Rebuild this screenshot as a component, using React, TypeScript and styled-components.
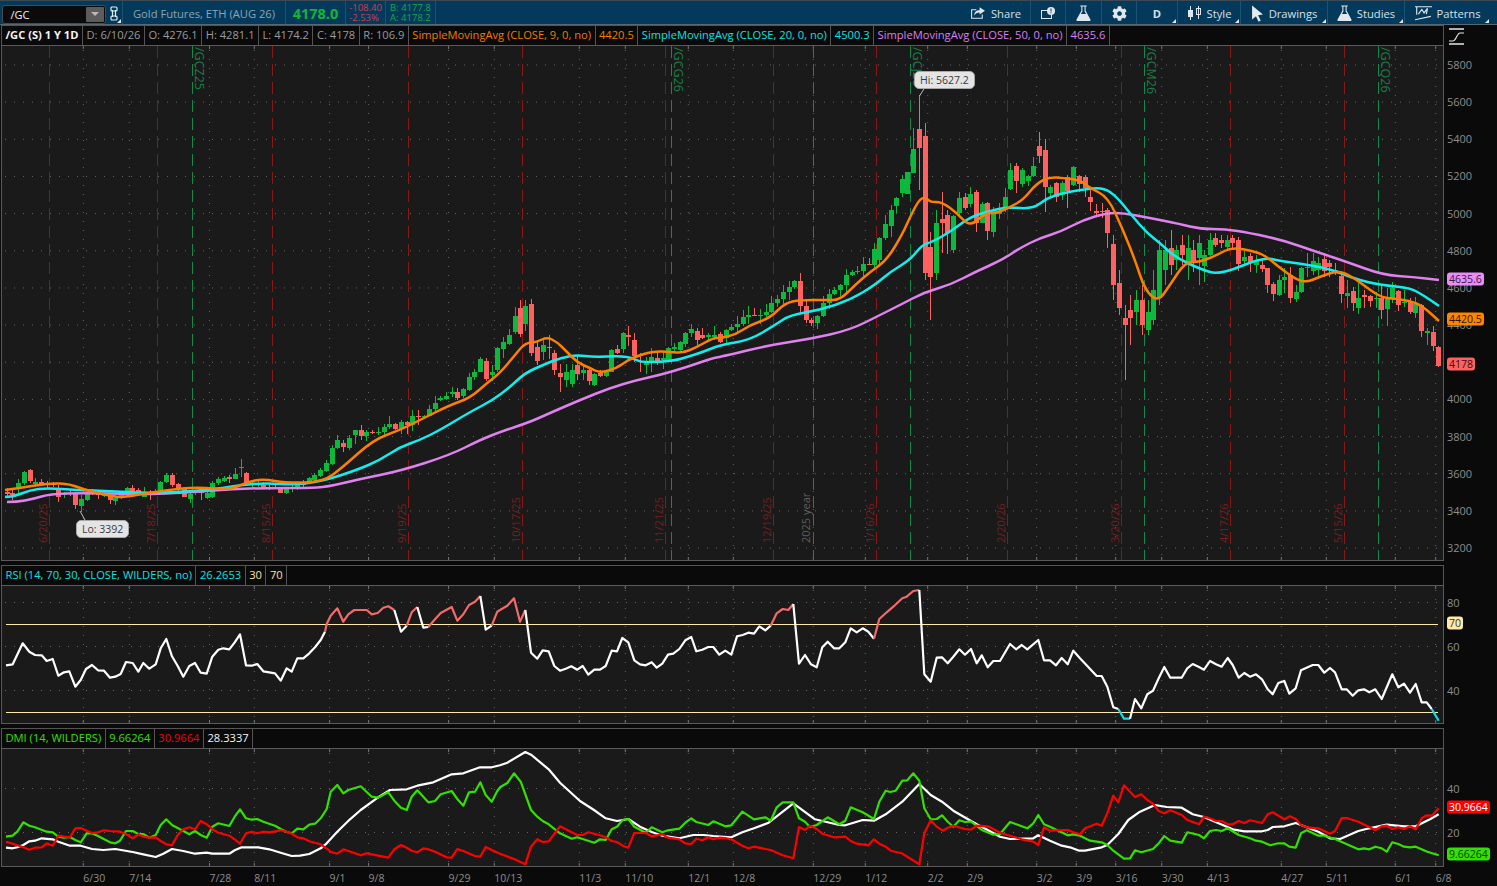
import React from "react";
import styled, { createGlobalStyle } from "styled-components";
import { FaCog } from "react-icons/fa";

const Global = createGlobalStyle`
  html, body { margin: 0; padding: 0; background: #0a0a0a; }
  * { box-sizing: border-box; }
`;
const FONT = `"Open Sans", "Liberation Sans", sans-serif`;

type Pt = [number, number];
const pts = (ox: number, s: string, oy = 585): Pt[] =>
  s.trim().split(/\s+/).map((p) => {
    const [a, b] = p.split(",").map(Number);
    return [ox + a / 3, oy + b / 3] as Pt;
  });
const raw = (s: string): Pt[] =>
  s.trim().split(/\s+/).map((p) => {
    const [a, b] = p.split(",").map(Number);
    return [a, b] as Pt;
  });
const toD = (p: Pt[]) => p.map((q, i) => `${i ? "L" : "M"}${q[0].toFixed(1)} ${q[1].toFixed(1)}`).join("");
const toSmooth = (p: Pt[]) => {
  let d = `M${p[0][0]} ${p[0][1]}`;
  for (let i = 1; i < p.length - 1; i++) {
    const mx = (p[i][0] + p[i + 1][0]) / 2;
    const my = (p[i][1] + p[i + 1][1]) / 2;
    d += `Q${p[i][0]} ${p[i][1]} ${mx.toFixed(1)} ${my.toFixed(1)}`;
  }
  const last = p[p.length - 1];
  return `${d}L${last[0]} ${last[1]}`;
};

/* ---------- price lines ---------- */
const SMA9 = raw(`5,490 20,488 50,483 70,484 85,490 115,497 125,497 167,490 197,487 230,490 247,482 263,479 287,483 323,482 343,467 373,440 400,430 420,420 450,405 470,398 487,383 500,373 515,355 525,343 537,342 547,337 557,342 567,352 578,363 590,368 600,373 617,368 628,360 640,355 655,351 670,352 683,353 697,347 713,338 720,338 735,335 750,325 770,318 785,303 800,300 825,300 840,300 855,285 870,272 887,260 903,233 910,217 920,198 927,198 930,202 942,202 957,213 970,227 985,213 997,213 1010,207 1023,200 1037,183 1050,177 1063,178 1080,180 1090,188 1108,197 1123,230 1135,260 1145,290 1158,302 1170,285 1185,262 1200,262 1217,255 1232,247 1257,252 1267,257 1280,268 1297,280 1307,282 1317,278 1333,272 1343,272 1357,280 1370,290 1383,298 1400,299 1417,303 1427,310 1439,321`);
const SMA20 = raw(`5,497 13,497 30,490 47,488 77,490 110,491 143,493 180,492 217,489 240,485 267,483 293,485 323,481 357,470 380,460 400,447 420,440 440,430 470,412 493,400 510,387 525,373 543,365 560,358 577,355 593,357 620,356 633,358 640,362 660,362 677,360 687,357 703,352 720,345 750,340 775,325 790,315 820,310 850,300 875,285 890,272 910,260 922,245 932,242 950,232 970,217 990,211 1007,207 1033,209 1047,198 1063,193 1080,190 1103,187 1117,197 1133,217 1147,233 1160,243 1175,257 1200,269 1220,275 1263,257 1280,261 1310,265 1333,270 1350,277 1370,283 1390,286 1410,288 1423,295 1439,306`);
const SMA50 = raw(`7,502 17,502 33,499 50,494 83,493 133,494 157,494 193,492 233,489 267,488 307,488 327,487 360,479 400,471 450,455 480,440 500,432 530,422 550,413 580,400 610,388 637,380 660,375 687,367 713,358 720,357 770,345 810,339 850,330 880,315 900,305 925,292 950,285 975,272 1002,260 1020,248 1040,238 1060,232 1083,220 1107,213 1123,213 1150,218 1180,224 1200,229 1225,229 1250,233 1282,240 1317,252 1347,262 1383,275 1413,277 1439,280`);

/* ---------- candles ---------- */
type Candle = { x: number; t: number; b: number; h: number; l: number; up: boolean };
const list = (ox: number, oy: number, s: string): Candle[] =>
  s.trim().split(/\s*;\s*/).filter(Boolean).map((r) => {
    const [zx, c, t, b, h, l] = r.split(/\s+/);
    return {
      x: ox + +zx / 3,
      up: c === "g",
      t: oy + +t / 3,
      b: oy + +b / 3,
      h: oy + +(h ?? t) / 3,
      l: oy + +(l ?? b) / 3,
    };
  });
const seeded = (a: number) => () => {
  a |= 0; a = (a + 0x6d2b79f5) | 0;
  let t = Math.imul(a ^ (a >>> 15), 1 | a);
  t = (t + Math.imul(t ^ (t >>> 7), 61 | t)) ^ t;
  return ((t ^ (t >>> 14)) >>> 0) / 4294967296;
};
const interp = (k: Pt[], x: number) => {
  for (let i = 1; i < k.length; i++) {
    if (x <= k[i][0]) {
      const f = (x - k[i - 1][0]) / (k[i][0] - k[i - 1][0]);
      return k[i - 1][1] + (k[i][1] - k[i - 1][1]) * f;
    }
  }
  return k[k.length - 1][1];
};
const gen = (seed: number, keys: Pt[], from: number, to: number): Candle[] => {
  const r = seeded(seed);
  const out: Candle[] = [];
  let prev = interp(keys, from - 5.73);
  for (let x = from; x <= to; x += 5.73) {
    const c = interp(keys, x) + (r() - 0.5) * 9;
    const t = Math.min(prev, c);
    const b = Math.max(prev, c);
    out.push({ x, t, b, h: t - r() * 9, l: b + r() * 9, up: c < prev });
    prev = c;
  }
  return out;
};

const CANDLES: Candle[] = [
  ...list(0, 440, `20 r 155 163 145 170;37 r 160 166 143 180;55 g 128 145 118 160;72 g 97 128 92 135;89 r 90 122 87 130;106 g 125 132 115 140;123 r 126 132 118 135;140 r 130 136 122 145;158 r 130 136 125 140;175 r 150 172 135 185;192 g 162 166 155 175;209 r 158 161 150 168;226 r 162 195 155 208;243 g 178 198 165 215;260 g 163 180 158 182;277 r 153 157 146 165;294 r 158 165 150 178;312 g 163 167 155 172;329 r 165 180 158 192;346 g 173 182 170 195;363 g 160 172 158 178;380 g 145 160 140 165;397 r 145 155 135 160;414 r 150 160 145 165;431 g 158 170 140 172;449 r 160 163 150 180;466 g 152 160 148 165;481 g 125 158 122 160;499 g 104 125 100 130;517 r 104 135 100 140;534 r 132 148 128 152;551 r 148 170 145 172;569 g 162 178 155 190;586 g 155 160 150 165;603 r 145 160 140 180;620 g 160 175 155 178;637 g 130 170 122 173;654 g 118 130 110 135;671 g 114 122 108 125;688 r 111 116 106 130;705 g 103 116 84 118;722 g 80 84 57 110;739 r 98 130 96 135;756 g 130 135 125 140;773 g 128 130 120 140;790 r 135 145 125 148;807 r 140 143 132 150;824 r 140 143 134 148;841 r 145 158 140 160;858 g 148 160 145 162;875 g 144 147 135 155;892 g 130 148 125 150;909 r 126 135 120 140;926 g 115 130 110 132;943 g 105 120 100 124;960 g 90 108 85 110;977 g 68 92 60 95;995 g 25 72 15 75;1012 g 0 25 -15 28;1029 r 8 22 0 35;1047 g -5 25 -15 30`),
  ...gen(7, raw(`350,435 362,434 375,430 390,426 405,425 415,412 425,413 438,405`), 355, 437),
  ...list(420, 290, `60 g 325 330 318 332;78 g 318 328 305 330;95 g 306 312 292 320;112 r 306 324 293 330;129 g 297 318 295 325;146 g 262 300 250 302;163 g 246 262 238 270;181 g 207 245 200 247;198 r 213 266 205 272;215 g 247 255 225 272;232 g 174 240 172 245;249 g 156 178 140 205;266 g 136 162 118 164;284 g 78 126 52 132;301 r 54 132 30 140;316 g 48 102 30 122;334 r 42 190 27 197;352 r 172 212 155 225;369 g 166 186 150 210;386 r 170 174 135 208;403 r 190 240 180 255;420 r 250 262 222 305;437 g 246 270 222 290;455 g 240 282 222 290;472 r 226 252 195 270;489 g 240 249 222 270;506 r 241 272 235 284;523 g 252 285 250 287;540 r 248 258 240 262;557 g 245 258 242 260;574 g 180 245 178 247;591 r 178 188 165 192;608 g 130 178 126 190;625 r 135 140 108 168;642 r 150 198 128 215;660 r 195 198 188 245;677 g 212 226 200 252;694 g 202 212 175 245;711 r 204 215 185 225;728 g 204 210 183 238;745 g 175 212 172 214;762 g 172 178 160 190;779 g 155 180 152 182;796 g 128 162 125 170;813 g 118 130 102 142;830 r 122 150 115 165;847 r 135 145 115 148;865 g 136 141 128 150;882 g 135 142 108 150;899 r 132 155 125 158`),
  ...gen(23, raw(`720,338 735,325 745,320 755,315 765,315 775,300 785,285 797,278 801,315 808,318 815,320 822,300 830,292 840,290 850,270 865,268 880,242`), 725.5, 875),
  ...list(860, 60, `58 g 535 600 530 620;75 g 492 535 465 540;92 g 450 498 435 530;108 g 415 437 410 460;126 g 358 400 345 412;142 g 336 402 335 402;159 g 268 338 205 338;178 r 207 263 105 390;194 r 228 640 190 660;211 r 560 650 515 780;229 g 490 640 450 660;245 r 477 490 395 580;262 r 465 520 450 582;279 g 468 570 465 580;298 g 415 460 395 465;315 r 410 445 400 450;331 g 402 432 380 440;349 r 396 490 390 515;366 g 432 488 425 488;382 r 430 512 425 540;400 g 458 515 440 532;417 g 457 463 430 478;434 g 412 450 385 455;451 g 330 386 310 390;469 r 318 362 308 398;486 g 330 372 325 380;503 g 348 362 345 378;520 g 318 348 292 350;537 r 258 288 215 310;554 r 270 380 237 455;571 g 380 400 375 410;589 r 368 410 365 425;605 g 370 405 362 420;622 r 350 392 345 445;640 g 322 375 318 378;657 r 347 372 345 395;674 r 352 385 345 412;691 r 410 425 380 452;708 r 454 458 432 470;725 r 452 455 428 475;742 r 450 518 445 565`),
  ...list(0, 0, `3339 r 732 855 705 900;3357 r 849 924 810 945;3375 r 954 975 915 1140;3390 r 930 954 885 1035;3408 g 900 936 870 975;3426 r 900 975 855 1005;3444 g 936 990 900 1005;3459 g 870 960 810 975;3477 g 750 894 720 915;3495 g 750 810 720 855;3513 r 744 795 690 825;3528 g 750 780 735 810;3546 r 735 765 705 795;3564 g 744 786 705 840;3579 r 750 786 720 816;3597 g 729 774 705 855`),
  ...list(1200, 240, `12 g 45 78 30 125;30 g 0 45 -20 48;45 r -5 15 -20 22;62 r 0 8 -15 25;80 g 0 20 -15 28;97 r -5 10 -15 30;115 r 0 72 -8 92;133 g 52 64 30 75;150 r 48 68 40 95;167 g 60 75 45 100;185 r 75 87 60 95;201 r 85 135 83 158;218 r 132 162 125 182;236 g 120 165 105 168;253 g 110 120 85 160;270 r 105 175 80 188;287 g 156 178 135 185;304 g 85 155 82 158;321 g 80 85 40 112;338 g 62 92 40 105;355 g 68 90 50 108;372 r 57 93 38 110;388 r 68 80 60 110;406 r 90 95 70 105;424 r 108 162 105 190;441 g 160 167 120 205;458 r 153 188 140 212;475 g 173 204 130 222;492 r 165 170 150 205;509 r 168 183 165 200;527 g 174 178 155 205;543 r 174 210 135 237;560 g 176 207 145 258;577 g 145 173 127 190;595 r 153 195 150 213;612 g 185 190 150 200;629 r 185 217 175 222;646 g 192 220 170 235;664 r 195 272 193 290;681 g 273 279 265 315;698 r 276 318 258 333;715 r 320 378 318 381`),
];

/* ---------- RSI and DMI ---------- */
const RSI: Pt[] = [
  ...pts(0, `18,241 38,238 68,175 88,200 105,210 125,211 140,228 158,222 175,272 192,262 208,259 226,305 242,285 258,252 276,240 294,256 312,257 330,278 346,275 362,267 378,231 398,234 415,260 430,234 448,251 467,238 482,190 499,162 516,214 533,243 550,275 568,243 585,234 602,263 620,266 637,215 655,194 670,190 688,193 704,172 720,148 738,241 755,242 772,237 790,259 808,262 825,265 842,287 860,250 875,260 892,220 910,220 928,205 945,187 962,165 975,140 980,117 992,92 1012,70 1030,110 1045,88 1063,75 1082,75 1100,75 1115,88 1133,84 1150,68 1165,64 1183,75 1203,140 1220,122 1235,82 1252,66 1270,128 1285,126 1305,103 1322,84 1355,66 1372,107 1390,88 1407,60 1425,50 1441,33 1457,134 1475,122 1492,80`),
  ...pts(500, `0,75 22,62 42,40 60,110 76,75 93,203 112,221 128,196 146,199 163,243 180,257 197,251 214,244 232,254 248,243 265,269 283,254 300,254 317,243 335,197 351,199 367,159 385,172 403,226 420,238 437,241 455,232 470,248 487,236 504,209 520,206 538,192 556,166 574,156 589,199 607,194 625,186 640,186 658,209 676,197 694,209 711,154 728,150 745,143 762,146 778,124 796,136 812,122 830,85 848,72 865,75 880,57 897,236 915,210 933,238 950,247 967,187 983,170 1002,190 1018,190 1036,172 1052,130 1070,142 1088,130 1105,140 1122,161 1138,102 1160,82 1180,65 1207,40 1220,35 1240,18 1258,15 1273,268 1292,290 1310,218 1326,217 1343,235 1360,215 1378,193 1395,209 1413,192 1430,235 1445,211 1463,247 1480,228`),
  ...pts(1000, `0,228 30,177 48,193 65,180 82,193 115,165 132,226 150,226 168,241 185,219 203,238 220,197 240,220 290,273 305,273 322,305 340,367 355,372 372,401 390,401 405,342 424,370 442,328 459,317 476,280 493,246 511,278 545,278 562,250 578,237 597,246 612,254 630,228 648,238 665,245 683,219 698,240 716,278 733,264 750,275 768,268 786,283 803,313 818,328 835,294 853,288 868,326 887,310 903,256 938,240 955,240 973,263 990,249 1005,262 1025,313 1040,313 1058,332 1075,316 1092,313 1108,322 1126,313 1145,342 1177,268 1195,307 1212,296 1230,323 1247,297 1265,352 1280,352 1295,372 1316,407`),
];
const DMI_G: Pt[] = [
  ...pts(0, `18,755 38,752 52,740 70,712 88,722 105,727 140,740 158,742 175,755 192,758 210,756 226,765 242,772 260,745 276,745 294,753 330,772 346,775 360,767 378,738 398,738 415,747 430,747 448,758 467,750 482,720 499,703 516,720 550,738 568,748 585,738 602,750 620,758 637,725 655,715 688,723 704,695 720,673 738,700 755,704 772,702 790,710 825,722 842,732 860,741 875,745 892,731 910,733 928,719 945,716 962,700 980,672 992,620 1012,600 1030,625 1045,615 1082,604 1115,635 1133,638 1165,622 1183,647 1203,668 1220,675 1235,635 1252,616 1285,652 1305,648 1322,628 1355,618 1372,642 1390,662 1407,622 1425,620 1441,592 1457,630 1475,650 1492,618`),
  ...pts(500, `0,607 22,594 42,565 62,590 93,675 112,695 128,708 146,718 180,745 215,761 232,757 283,773 300,763 317,765 335,733 351,725 368,705 385,702 403,725 437,743 455,727 487,742 504,736 538,731 556,713 574,700 589,711 625,720 640,709 676,724 694,721 727,680 762,703 796,697 812,707 830,667 848,652 880,652 897,700 915,710 930,726 950,720 983,697 1018,718 1036,707 1052,667 1088,682 1122,702 1138,650 1157,617 1170,621 1187,617 1207,587 1222,586 1240,565 1258,587 1273,670 1292,703 1310,702 1326,691 1343,710 1360,725 1378,706 1395,711 1413,709 1445,735 1480,749`),
  ...pts(1000, `0,747 30,711 82,730 100,715 115,690 132,718 150,725 203,751 220,748 240,752 270,767 305,772 322,780 340,797 372,821 390,820 405,796 424,802 459,792 476,775 493,753 511,767 545,773 562,742 597,750 612,760 630,738 648,735 665,738 683,730 716,750 750,760 768,767 786,770 811,781 835,775 853,775 868,785 887,788 903,745 920,736 955,752 973,752 1005,762 1075,793 1092,790 1108,793 1126,785 1145,790 1160,800 1177,772 1195,777 1212,785 1230,787 1247,785 1282,800 1316,811`),
];
const DMI_R: Pt[] = [
  ...pts(0, `18,770 38,776 70,787 88,794 105,788 125,787 140,775 158,782 175,752 192,755 210,757 226,730 242,729 260,737 276,744 294,742 312,736 330,738 360,740 378,747 398,760 415,748 430,755 448,758 467,757 482,768 499,778 516,781 533,750 550,733 568,727 585,733 602,708 620,718 637,733 655,743 688,752 704,763 720,776 738,745 755,740 772,745 790,740 808,742 825,739 842,736 860,740 875,746 892,757 910,760 928,769 945,773 962,778 980,791 992,800 1012,806 1030,793 1045,798 1082,811 1100,805 1165,818 1183,793 1203,780 1220,788 1235,797 1252,802 1270,790 1285,793 1305,800 1340,817 1355,818 1372,792 1390,798 1425,813 1441,815 1457,786 1475,795`),
  ...pts(500, `0,806 42,822 76,838 93,785 112,763 128,771 146,769 180,724 215,742 232,750 248,750 265,742 300,751 317,757 335,768 351,771 368,782 385,788 403,744 437,744 455,754 487,748 504,758 538,763 556,775 574,777 589,761 607,766 625,757 640,763 658,758 676,759 694,763 727,782 745,790 762,785 796,792 812,795 848,811 880,820 897,726 915,735 930,722 950,732 967,746 1002,757 1036,755 1052,768 1070,776 1105,781 1122,763 1138,776 1157,785 1172,797 1205,805 1258,838 1273,745 1292,706 1310,725 1328,737 1343,728 1360,722 1395,732 1413,734 1430,722 1463,724 1480,732`),
  ...pts(1000, `0,743 30,752 65,763 100,770 115,780 132,727 150,737 203,735 220,742 240,748 255,730 290,716 305,722 322,685 340,632 355,652 372,601 405,636 424,628 442,645 459,656 476,678 493,685 511,676 545,690 562,705 597,718 612,695 630,700 648,708 665,708 683,718 698,718 716,708 733,714 750,706 786,714 803,688 818,682 853,703 870,694 887,702 903,720 920,727 955,730 990,746 1005,738 1025,699 1040,699 1075,710 1126,735 1145,724 1160,722 1177,732 1195,727 1212,732 1230,724 1247,733 1265,700 1280,691 1295,692 1316,670`),
];
const DMI_W: Pt[] = [
  ...pts(0, `18,788 38,790 52,787 70,780 88,769 105,767 125,760 158,763 175,770 210,782 242,782 276,792 310,795 346,792 398,801 430,808 467,816 490,806 516,792 550,798 585,806 620,803 637,806 688,806 704,796 725,787 775,787 808,793 842,803 875,813 900,812 928,807 962,790 980,775 1012,740 1050,703 1082,675 1130,640 1170,615 1220,613 1252,602 1300,592 1355,568 1390,565 1440,547 1475,547`),
  ...pts(500, `0,541 22,533 76,501 93,509 146,553 180,593 240,648 282,675 317,700 351,708 385,702 420,725 455,741 487,752 538,760 580,750 610,750 640,753 694,757 727,742 762,730 806,713 880,655 945,703 983,712 1018,720 1036,721 1088,705 1122,707 1157,688 1207,650 1258,597 1292,630 1326,650 1360,677 1430,718 1463,735`),
  ...pts(1000, `0,755 30,762 100,760 115,751 150,767 185,782 210,787 238,797 255,797 305,787 322,780 355,747 385,705 420,680 465,660 500,666 545,668 578,688 612,696 640,708 698,733 733,739 786,739 803,735 818,726 853,724 887,714 903,720 955,740 990,760 1020,762 1075,738 1108,730 1160,719 1212,724 1247,724 1290,703 1316,688`),
];

const rsiColor = (y: number) => (y < 624.3 ? "#f46a6a" : y > 712.3 ? "#12dcec" : "#ffffff");
const rsiSegments = () => {
  const out: { c: string; p: Pt[] }[] = [];
  for (let i = 1; i < RSI.length; i++) {
    const c = rsiColor(RSI[i][1]);
    const last = out[out.length - 1];
    if (last && last.c === c) last.p.push(RSI[i]);
    else out.push({ c, p: [RSI[i - 1], RSI[i]] });
  }
  return out;
};

/* ---------- chart annotations ---------- */
const GRID_X = [83.3, 129.3, 209.5, 254.3, 329.6, 368.6, 448.6, 494.3, 579.3, 625.3, 688.3, 733.3, 813.3, 865.3, 927.7, 967.3, 1036.7, 1076.3, 1115.7, 1161.7, 1207.3, 1281.3, 1326.3, 1395.3, 1435.7];
const DATES = ["6/30", "7/14", "7/28", "8/11", "9/1", "9/8", "9/29", "10/13", "11/3", "11/10", "12/1", "12/8", "12/29", "1/12", "2/2", "2/9", "3/2", "3/9", "3/16", "3/30", "4/13", "4/27", "5/11", "6/1", "6/8"];
const RED_X = [49.5, 157.5, 272.5, 408.5, 522.5, 665.5, 773.5, 876.5, 1007.5, 1121.5, 1230.5, 1344.5];
const GREEN_X = [192.5, 671.5, 910.5, 1144.5, 1378.5];
const RED_LABELS: [string, number][] = [["6/20/25", 47], ["7/18/25", 155], ["8/15/25", 270], ["9/19/25", 406], ["10/17/25", 520], ["11/21/25", 663], ["12/19/25", 771], ["1/16/26", 874], ["2/20/26", 1005], ["3/20/26", 1119], ["4/17/26", 1228], ["5/15/26", 1342]];
const GREEN_LABELS: [string, number][] = [["/GCZ25", 195], ["/GCG26", 674], ["/GCJ26", 913], ["/GCM26", 1147], ["/GCQ26", 1381]];
const PRICE_TICKS = [5800, 5600, 5400, 5200, 5000, 4800, 4600, 4400, 4200, 4000, 3800, 3600, 3400, 3200];
const priceY = (p: number) => 65 + (5800 - p) * 0.1858;

/* ---------- layout ---------- */
const Page = styled.div`
  width: 1497px;
  height: 886px;
  overflow: hidden;
  background: #0a0a0a;
  display: flex;
  flex-direction: column;
  font-family: ${FONT};
`;
const Toolbar = styled.div`
  height: 25px;
  flex: none;
  background: #033a5c;
  border-top: 1px solid #3b4a54;
  border-bottom: 1px solid #5a6670;
  padding-right: 7px;
  display: flex;
  align-items: stretch;
  color: #d6e0e6;
  font-size: 11.2px;
`;
const SymbolBox = styled.div`
  width: 104px;
  height: 19px;
  margin: 2px 0 0 1px;
  background: #0b0b0b;
  border: 1px solid #4a4a4a;
  border-radius: 3px;
  display: flex;
  align-items: center;
  justify-content: space-between;
  padding: 0 1px 0 8px;
  color: #f0f0f0;
  font-size: 11px;
`;
const DropButton = styled.div`
  width: 18px;
  height: 15px;
  background: #5c5c5c;
  border-radius: 1px;
  display: flex;
  align-items: center;
  justify-content: center;
  &::after {
    content: "";
    border-left: 4px solid transparent;
    border-right: 4px solid transparent;
    border-top: 4px solid #b8b8b8;
  }
`;
const ToolCell = styled.div<{ $w: number; $line?: boolean }>`
  width: ${(p) => p.$w}px;
  flex: none;
  display: flex;
  align-items: center;
  justify-content: center;
  gap: 5px;
  padding-top: 1px;
  position: relative;
  white-space: nowrap;
  border-right: ${(p) => (p.$line ? "1px solid #1d5273" : "none")};
`;
const Corner = styled.span`
  position: absolute;
  right: 1px;
  bottom: 1px;
  width: 0;
  height: 0;
  border-left: 4px solid transparent;
  border-bottom: 4px solid #dfe7ec;
`;
const Title = styled.span`
  color: #8ea4b2;
  font-size: 11.2px;
`;
const LastPrice = styled.span`
  color: #12b53a;
  font-size: 14.5px;
  font-weight: 700;
`;
const Pair = styled.div<{ $c: string }>`
  display: flex;
  flex-direction: column;
  align-items: flex-start;
  color: ${(p) => p.$c};
  font-size: 9.5px;
  line-height: 10px;
`;
const Spacer = styled.div`
  flex: 1;
`;
const Stack = styled.div`
  display: flex;
  flex-direction: column;
  gap: 4px;
`;
const Pane = styled.section`
  display: flex;
  flex-direction: column;
`;
const Legend = styled.div`
  width: 1443px;
  height: 20px;
  margin-left: 1px;
  border: 1px solid #555;
  border-bottom: none;
  background: #0a0a0a;
  display: flex;
  align-items: stretch;
  font-size: 11.15px;
`;
const LegendCell = styled.div<{ $c: string; $bold?: boolean }>`
  color: ${(p) => p.$c};
  font-weight: ${(p) => (p.$bold ? 700 : 400)};
  padding: 0 3.5px 2px;
  border-right: 1px solid #555;
  display: flex;
  align-items: center;
  white-space: nowrap;
`;
const Row = styled.div<{ $h: number }>`
  height: ${(p) => p.$h}px;
  display: flex;
  position: relative;
`;
const Plot = styled.div`
  width: 1443px;
  margin-left: 1px;
  flex: none;
  position: relative;
  outline: 1px solid #5a5a5a;
  outline-offset: -1px;
  svg {
    display: block;
  }
`;
const Axis = styled.div`
  flex: 1;
  position: relative;
  background: #0a0a0a;
`;
const AxisLabel = styled.span`
  position: absolute;
  left: 3px;
  transform: translateY(-50%);
  color: #8d8d8d;
  font-size: 11px;
  line-height: 14px;
`;
const Badge = styled.span<{ $bg: string; $fg: string }>`
  position: absolute;
  left: 3px;
  transform: translateY(-50%);
  padding: 0 2px;
  height: 13px;
  background: ${(p) => p.$bg};
  color: ${(p) => p.$fg};
  border-radius: 3px;
  font-size: 10.5px;
  line-height: 13px;
  z-index: 2;
`;
const Bubble = styled.div`
  position: absolute;
  height: 18px;
  padding: 0 5px;
  background: #e4e4e4;
  border: 1px solid #a8a8a8;
  border-radius: 5px;
  color: #3a3a3a;
  font-size: 10.5px;
  line-height: 16px;
  white-space: nowrap;
`;
const TimeAxis = styled.div`
  height: 19px;
  position: relative;
`;
const DateLabel = styled.span`
  position: absolute;
  top: 4px;
  color: #8d8d8d;
  font-size: 10.5px;
  line-height: 14px;
`;
const ToolAxisIcon = styled.div`
  position: absolute;
  left: 4px;
  top: -17px;
`;
const ExpiryText = styled.text<{ $c: string; $size?: number }>`
  fill: ${(p) => p.$c};
  font-family: ${FONT};
  font-size: ${(p) => p.$size ?? 11}px;
`;

/* ---------- chart pieces ---------- */
const Frame: React.FC<{ y0: number; h: number; ticks: number[]; children: React.ReactNode }> = ({ y0, h, ticks, children }) => (
  <svg width={1443} height={h} viewBox={`1 ${y0} 1443 ${h}`}>
    <rect x={1} y={y0} width={1443} height={h} fill="#1a1a1a" />
    {ticks.map((t) => (
      <line key={t} x1={5} x2={1441} y1={t} y2={t} stroke="#666" strokeDasharray="1 8" />
    ))}
    {GRID_X.map((x) => (
      <g key={x}>
        <line x1={x} x2={x} y1={y0 + 5} y2={y0 + h} stroke="#666" strokeDasharray="1 8" />
        <line x1={x} x2={x} y1={y0} y2={y0 + 4} stroke="#777" />
        <line x1={x} x2={x} y1={y0 + h - 4} y2={y0 + h} stroke="#777" />
      </g>
    ))}
    {children}
  </svg>
);
const Line: React.FC<{ p: Pt[]; c: string; w?: number; smooth?: boolean }> = ({ p, c, w = 2.2, smooth }) => (
  <path d={smooth ? toSmooth(p) : toD(p)} fill="none" stroke={c} strokeWidth={w} strokeLinejoin="round" />
);
const Candles: React.FC = () => (
  <g shapeRendering="crispEdges">
    {CANDLES.map((k, i) => {
      const X = Math.round(k.x);
      const c = k.up ? "#0cb93c" : "#ff6161";
      return (
        <g key={i}>
          <rect x={X} y={k.h} width={1} height={Math.max(1, k.l - k.h)} fill={c} />
          <rect x={X - 2} y={k.t} width={5} height={Math.max(1, k.b - k.t)} fill={c} />
        </g>
      );
    })}
  </g>
);

/* ---------- icons ---------- */
const LinkIcon = () => (
  <svg width="8" height="15" viewBox="0 0 8 15" fill="none" stroke="#e4ebef" strokeWidth="1.2">
    <rect x="1" y="1" width="6" height="4" rx="1" />
    <rect x="1" y="10" width="6" height="4" rx="1" />
    <path d="M2.5 4v7M5.500 4v7" />
  </svg>
);
const ShareIcon = () => (
  <svg width="16" height="14" viewBox="0 0 15 13">
    <path d="M1 3h5v1H2v7h9V8h1v4H1z" fill="#dfe7ec" />
    <path d="M9 1l5 3.500-5 3.500V6C6.500 6 5 7 4 9c0-3.500 2-5 5-5z" fill="#dfe7ec" />
  </svg>
);
const AlertIcon = () => (
  <svg width="16" height="13" viewBox="0 0 16 13">
    <path d="M1 3h7v1H2v7h9V8h1v4H1z" fill="#dfe7ec" />
    <circle cx="11" cy="4" r="4" fill="#dfe7ec" />
    <rect x="10.500" y="1.500" width="1" height="3" fill="#033a5c" />
    <rect x="10.500" y="5.300" width="1" height="1" fill="#033a5c" />
  </svg>
);
const FlaskIcon = () => (
  <svg width="15" height="18" viewBox="0 0 14 16">
    <path d="M4 1h6v1H9v4l4.500 8c.3.600 0 1.500-1 1.500h-11c-1 0-1.300-.9-1-1.500L5 6V2H4z" fill="#e0e8ed" />
    <path d="M6 2h2v4.500L9.500 9h-5L6 6.500z" fill="#033a5c" />
  </svg>
);
const CandleIcon = () => (
  <svg width="15" height="14" viewBox="0 0 15 14" fill="#dfe7ec">
    <rect x="3" y="0" width="1" height="14" />
    <rect x="1" y="4" width="5" height="7" />
    <rect x="11" y="0" width="1" height="13" />
    <path d="M9 2h5v7H9zM10 3v5h3V3z" fillRule="evenodd" />
  </svg>
);
const PointerIcon = () => (
  <svg width="13" height="17" viewBox="0 0 12 15">
    <path d="M1 0l10 8.500-4.500.5 2.500 5-2 1-2.400-5L1 13z" fill="#e4ebef" />
  </svg>
);
const PatternIcon = () => (
  <svg width="17" height="17" viewBox="0 0 15 15" fill="none" stroke="#dfe7ec">
    <path d="M0 1.500h15M1.500 1.500v7M0 13l14-3M3 8l3-4 2 3 3-4-1 5" />
  </svg>
);
const SCurveIcon = () => (
  <svg width="18" height="17" viewBox="0 0 18 17" fill="none" stroke="#e6e6e6" strokeWidth="1.200">
    <path d="M1 1h15M1 16h15" strokeWidth="1.600" />
    <path d="M1 13h4c3 0 4-8 7-8h4" />
  </svg>
);

/* ---------- page ---------- */
export default function App() {
  return (
    <Page>
      <Global />
      <Toolbar>
        <ToolCell $w={106}>
          <SymbolBox>
            /GC
            <DropButton />
          </SymbolBox>
        </ToolCell>
        <ToolCell $w={17} $line>
          <LinkIcon />
          <Corner />
        </ToolCell>
        <ToolCell $w={163} $line>
          <Title>Gold Futures, ETH (AUG 26)</Title>
        </ToolCell>
        <ToolCell $w={60} $line>
          <LastPrice>4178.0</LastPrice>
        </ToolCell>
        <ToolCell $w={40} $line>
          <Pair $c="#d23a52">
            <span>-108.40</span>
            <span>-2.53%</span>
          </Pair>
        </ToolCell>
        <ToolCell $w={50} $line>
          <Pair $c="#14a84a">
            <span>B: 4177.8</span>
            <span>A: 4178.2</span>
          </Pair>
        </ToolCell>
        <Spacer />
        <ToolCell $w={70} $line>
          <ShareIcon />
          Share
        </ToolCell>
        <ToolCell $w={35} $line>
          <AlertIcon />
        </ToolCell>
        <ToolCell $w={36} $line>
          <FlaskIcon />
        </ToolCell>
        <ToolCell $w={35} $line>
          <FaCog size={15} color="#e0e8ed" />
        </ToolCell>
        <ToolCell $w={41} $line>
          <b>D</b>
          <Corner />
        </ToolCell>
        <ToolCell $w={63} $line>
          <CandleIcon />
          Style
          <Corner />
        </ToolCell>
        <ToolCell $w={87} $line>
          <PointerIcon />
          Drawings
          <Corner />
        </ToolCell>
        <ToolCell $w={77} $line>
          <FlaskIcon />
          Studies
          <Corner />
        </ToolCell>
        <ToolCell $w={85}>
          <PatternIcon />
          Patterns
          <Corner />
        </ToolCell>
      </Toolbar>

      <Stack>
        <Pane>
          <Legend>
            <LegendCell $c="#f4f4f4" $bold>/GC (S) 1 Y 1D</LegendCell>
            <LegendCell $c="#9a9a9a">D: 6/10/26</LegendCell>
            <LegendCell $c="#9a9a9a">O: 4276.1</LegendCell>
            <LegendCell $c="#9a9a9a">H: 4281.1</LegendCell>
            <LegendCell $c="#9a9a9a">L: 4174.2</LegendCell>
            <LegendCell $c="#9a9a9a">C: 4178</LegendCell>
            <LegendCell $c="#9a9a9a">R: 106.9</LegendCell>
            <LegendCell $c="#f07a00">SimpleMovingAvg (CLOSE, 9, 0, no)</LegendCell>
            <LegendCell $c="#f07a00">4420.5</LegendCell>
            <LegendCell $c="#10e0e0">SimpleMovingAvg (CLOSE, 20, 0, no)</LegendCell>
            <LegendCell $c="#10e0e0">4500.3</LegendCell>
            <LegendCell $c="#d97ff0">SimpleMovingAvg (CLOSE, 50, 0, no)</LegendCell>
            <LegendCell $c="#d97ff0">4635.6</LegendCell>
          </Legend>
          <Row $h={516}>
            <Plot>
              <Frame y0={45} h={516} ticks={PRICE_TICKS.map(priceY)}>
                {RED_X.map((x) => (
                  <line key={x} x1={x} x2={x} y1={46} y2={561} stroke="#8a1616" strokeDasharray="12 6" />
                ))}
                {GREEN_X.map((x) => (
                  <line key={x} x1={x} x2={x} y1={46} y2={561} stroke="#0f8a48" strokeDasharray="12 6" />
                ))}
                <line x1={813.5} x2={813.5} y1={46} y2={561} stroke="#5e5e5e" strokeDasharray="12 6" />
                {RED_LABELS.map(([t, x]) => (
                  <ExpiryText key={t} $c="#742020" transform={`rotate(-90 ${x} 543)`} x={x} y={543}>{t}</ExpiryText>
                ))}
                {GREEN_LABELS.map(([t, x]) => (
                  <ExpiryText key={t} $c="#1a7e46" $size={12.5} transform={`rotate(90 ${x} 47)`} x={x} y={47}>{t}</ExpiryText>
                ))}
                <ExpiryText $c="#5e5e5e" transform="rotate(-90 810 543)" x={810} y={543}>2025 year</ExpiryText>
                <Candles />
                <Line p={SMA50} c="#df82ef" w={2.5} smooth />
                <Line p={SMA20} c="#14eded" w={2.5} smooth />
                <Line p={SMA9} c="#ff7f00" w={2.5} smooth />
                <path d="M919.500 96l5-8M80 511l5 9" stroke="#bbb" fill="none" />
              </Frame>
              <Bubble style={{ left: 913, top: 26 }}>Hi: 5627.2</Bubble>
              <Bubble style={{ left: 75, top: 475 }}>Lo: 3392</Bubble>
            </Plot>
            <Axis>
              <ToolAxisIcon>
                <SCurveIcon />
              </ToolAxisIcon>
              {PRICE_TICKS.map((p) => (
                <AxisLabel key={p} style={{ top: priceY(p) - 45 }}>{p}</AxisLabel>
              ))}
              <Badge $bg="#ea8cf5" $fg="#3c1a44" style={{ top: 279 - 45 }}>4635.6</Badge>
              <Badge $bg="#ff8400" $fg="#2e1600" style={{ top: 319 - 45 }}>4420.5</Badge>
              <Badge $bg="#ff6060" $fg="#3b0d0d" style={{ top: 364 - 45 }}>4178</Badge>
            </Axis>
          </Row>
        </Pane>

        <Pane>
          <Legend>
            <LegendCell $c="#10e0e0">RSI (14, 70, 30, CLOSE, WILDERS, no)</LegendCell>
            <LegendCell $c="#10e0e0">26.2653</LegendCell>
            <LegendCell $c="#ffe2a0">30</LegendCell>
            <LegendCell $c="#ffe2a0">70</LegendCell>
          </Legend>
          <Row $h={139}>
            <Plot>
              <Frame y0={585} h={139} ticks={[602.5, 646.5, 690.5]}>
                <line x1={6} x2={1438} y1={624.5} y2={624.5} stroke="#ffe9a8" />
                <line x1={6} x2={1438} y1={712.5} y2={712.5} stroke="#ffe9a8" />
                {rsiSegments().map((s, i) => (
                  <Line key={i} p={s.p} c={s.c} />
                ))}
              </Frame>
            </Plot>
            <Axis>
              <AxisLabel style={{ top: 17.500 }}>80</AxisLabel>
              <AxisLabel style={{ top: 61.500 }}>60</AxisLabel>
              <AxisLabel style={{ top: 105.500 }}>40</AxisLabel>
              <Badge $bg="#ffe9a8" $fg="#333" style={{ top: 38 }}>70</Badge>
            </Axis>
          </Row>
        </Pane>

        <Pane>
          <Legend>
            <LegendCell $c="#33e000">DMI (14, WILDERS)</LegendCell>
            <LegendCell $c="#33e000">9.66264</LegendCell>
            <LegendCell $c="#f00000">30.9664</LegendCell>
            <LegendCell $c="#f4f4f4">28.3337</LegendCell>
          </Legend>
          <Row $h={119}>
            <Plot>
              <Frame y0={748} h={119} ticks={[788.5, 832.5]}>
                <Line p={DMI_W} c="#ffffff" />
                <Line p={DMI_G} c="#33e000" />
                <Line p={DMI_R} c="#ff0000" />
              </Frame>
            </Plot>
            <Axis>
              <AxisLabel style={{ top: 40.500 }}>40</AxisLabel>
              <AxisLabel style={{ top: 84.500 }}>20</AxisLabel>
              <Badge $bg="#ff0000" $fg="#ffffff" style={{ top: 59 }}>30.9664</Badge>
              <Badge $bg="#33e000" $fg="#0e3a00" style={{ top: 106 }}>9.66264</Badge>
            </Axis>
          </Row>
          <TimeAxis>
            {DATES.map((d, i) => (
              <DateLabel key={d} style={{ left: GRID_X[i] }}>{d}</DateLabel>
            ))}
          </TimeAxis>
        </Pane>
      </Stack>
    </Page>
  );
}
